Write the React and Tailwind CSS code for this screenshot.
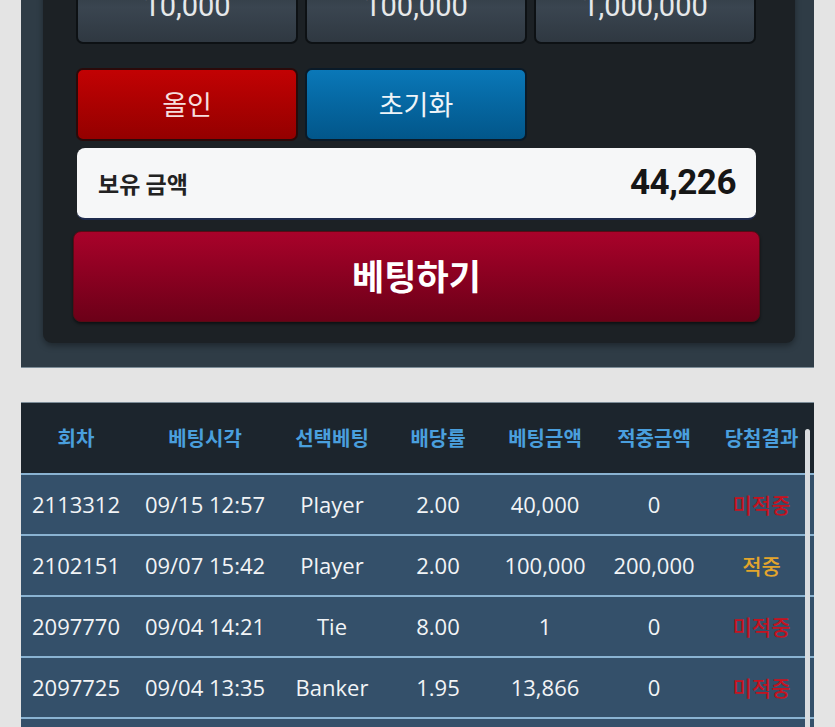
import React from "react";

const KR = { fontFamily: '"Noto Sans CJK KR", "Noto Sans", sans-serif' };
const NUM = { fontFamily: 'Roboto, "Noto Sans CJK KR", sans-serif' };
const DATA = { fontFamily: '"Open Sans", "Noto Sans CJK KR", sans-serif' };

const rows = [
  ["2113312", "09/15 12:57", "Player", "2.00", "40,000", "0", "미적중"],
  ["2102151", "09/07 15:42", "Player", "2.00", "100,000", "200,000", "적중"],
  ["2097770", "09/04 14:21", "Tie", "8.00", "1", "0", "미적중"],
  ["2097725", "09/04 13:35", "Banker", "1.95", "13,866", "0", "미적중"],
  ["2097701", "09/04 13:20", "Player", "2.00", "10,000", "0", "미적중"],
];

const headers = ["회차", "베팅시각", "선택베팅", "배당률", "베팅금액", "적중금액", "당첨결과"];

function Chip({ label }) {
  return (
    <div
      className="h-[73px] rounded-[7px] border-2 border-[#0d1114] bg-gradient-to-b from-[#2a333b] via-[#3a4550] to-[#2f3841] flex items-center justify-center text-[29px] text-[#e6e8ea] shadow-[inset_0_1px_0_rgba(255,255,255,0.08)]"
      style={NUM}
    >
      <span className="-translate-y-[1px]">{label}</span>
    </div>
  );
}

export default function App() {
  return (
    <div className="w-full h-[727px] overflow-hidden bg-[#e4e4e4]">
      {/* top panel */}
      <div className="-mt-[60px] mx-[21px] pt-[10px] pb-[24px] pl-[22px] pr-[19px] bg-[#2f3c46] border-b border-[#7d8d98]">
        <div className="rounded-[9px] bg-[#1c2125] pt-[21px] pb-[21px] pl-[33px] pr-[39px] shadow-[0_3px_6px_rgba(0,0,0,0.35)]">
          <div className="grid grid-cols-3 gap-[7px]">
            <Chip label="10,000" />
            <Chip label="100,000" />
            <Chip label="1,000,000" />
          </div>
          <div className="grid grid-cols-3 gap-[7px] mt-[24px]">
            <div
              className="h-[73px] rounded-[7px] border-2 border-[#2a0a0a] bg-gradient-to-b from-[#c20203] to-[#940000] flex items-center justify-center text-[27px] text-[#f6dede]"
              style={KR}
            >
              올인
            </div>
            <div
              className="h-[73px] rounded-[7px] border-2 border-[#0a1a28] bg-gradient-to-b from-[#0a78b8] to-[#02568a] flex items-center justify-center text-[27px] text-[#eef4f8]"
              style={KR}
            >
              초기화
            </div>
          </div>
          <div className="mt-[7px] ml-[1px] h-[72px] rounded-[8px] bg-[#f6f7f8] border-b-2 border-[#1e2b4d] flex items-center justify-between pl-[21px] pr-[20px]">
            <span className="text-[23px] font-bold text-[#222]" style={KR}>
              보유 금액
            </span>
            <span className="text-[35px] font-bold text-[#161616] tracking-[-0.5px]" style={NUM}>
              44,226
            </span>
          </div>
          <div
            className="mt-[11px] -ml-[3px] -mr-[4px] h-[91px] rounded-[8px] bg-gradient-to-b from-[#a9022a] to-[#6c0018] border border-[#5a0a14] shadow-[0_2px_3px_rgba(0,0,0,0.5)] flex items-center justify-center text-[35px] font-bold text-white"
            style={KR}
          >
            <span className="-translate-y-[1px]">베팅하기</span>
          </div>
        </div>
      </div>

      {/* table */}
      <div className="relative mt-[34px] mx-[21px] bg-[#34506a] border-t border-[#7d8d98]">
        <div className="grid grid-cols-[110px_148px_106px_106px_108px_110px_105px] h-[70px] bg-[#1c252d] items-center">
          {headers.map((h) => (
            <div key={h} className="text-center text-[20px] font-bold text-[#4a9fdd]" style={KR}>
              {h}
            </div>
          ))}
        </div>
        {rows.map((r, i) => (
          <div
            key={i}
            className="grid grid-cols-[110px_148px_106px_106px_108px_110px_105px] h-[61px] items-center border-t-2 border-[#8ab3d2]"
          >
            {r.map((c, j) => {
              if (j === 6) {
                return (
                  <div
                    key={j}
                    className={
                      "text-center text-[21px] font-medium " +
                      (c === "적중" ? "text-[#e3a52c]" : "text-[#c4121f]")
                    }
                    style={KR}
                  >
                    {c}
                  </div>
                );
              }
              return (
                <div key={j} className="text-center text-[22px] text-[#f2f4f6]" style={DATA}>
                  {c}
                </div>
              );
            })}
          </div>
        ))}
        <div className="absolute right-[4px] top-[26px] w-[5px] h-[400px] rounded-full bg-[#d9dcdf]" />
      </div>
    </div>
  );
}
